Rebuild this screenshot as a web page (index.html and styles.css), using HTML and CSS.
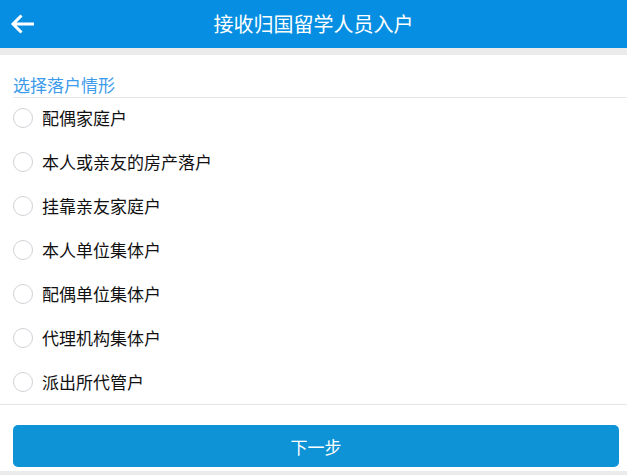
FILE: index.html
```html
<!DOCTYPE html>
<html lang="zh-CN">
<head>
  <meta charset="UTF-8" />
  <meta name="viewport" content="width=device-width, initial-scale=1.0"/>
  <title>接收归国留学人员入户</title>
  <link rel="stylesheet" href="styles.css">
</head>
<body>
  <div class="header">
    <a class="back" href="#">
      <svg width="26" height="24" viewBox="0 0 26 24">
        <path d="M4 12 H25 M12.5 3.5 L4 12 L12.5 20.5" fill="none" stroke="#fff" stroke-width="3"/>
      </svg>
    </a>
    <h1>接收归国留学人员入户</h1>
    <span></span>
  </div>

  <div class="page">
    <div class="section-title">选择落户情形</div>
    <ul class="options">
      <li><span class="radio"></span>配偶家庭户</li>
      <li><span class="radio"></span>本人或亲友的房产落户</li>
      <li><span class="radio"></span>挂靠亲友家庭户</li>
      <li><span class="radio"></span>本人单位集体户</li>
      <li><span class="radio"></span>配偶单位集体户</li>
      <li><span class="radio"></span>代理机构集体户</li>
      <li><span class="radio"></span>派出所代管户</li>
    </ul>
    <div class="actions">
      <button class="next">下一步</button>
    </div>
  </div>
</body>
</html>
```

FILE: styles.css
```css
body {
  margin: 0;
  background: #ebebeb;
  font-family: "Noto Sans CJK SC", "Liberation Sans", sans-serif;
  color: #111;
}

.header {
  height: 48px;
  background: #068fe2;
  display: grid;
  grid-template-columns: 1fr auto 1fr;
  align-items: center;
}

.back {
  display: flex;
  padding-left: 9px;
}

.header h1 {
  margin: 0;
  font-size: 20px;
  font-weight: normal;
  color: #fff;
  line-height: 48px;
}

.page {
  margin-top: 7px;
  background: #fff;
}

.section-title {
  margin-left: 13px;
  padding-top: 18px;
  line-height: 24px;
  font-size: 17px;
  color: #3d9be9;
  border-bottom: 1px solid #e6e6e6;
}

.options {
  list-style: none;
  margin: 0;
  padding: 0 0 2px;
  display: flex;
  flex-direction: column;
  gap: 4px;
  border-bottom: 1px solid #e6e6e6;
}

.options li {
  height: 40px;
  padding-left: 13px;
  display: flex;
  align-items: center;
  gap: 9px;
  font-size: 17px;
  line-height: 20px;
}

.radio {
  flex: none;
  box-sizing: border-box;
  width: 20px;
  height: 20px;
  border: 1px solid #cfd2d6;
  border-radius: 50%;
}

.actions {
  padding: 20px 8px 4px 13px;
}

.next {
  display: block;
  width: 100%;
  height: 42px;
  border: none;
  border-radius: 5px;
  background: #0e93d6;
  color: #fff;
  font-family: inherit;
  font-size: 17px;
}
```
